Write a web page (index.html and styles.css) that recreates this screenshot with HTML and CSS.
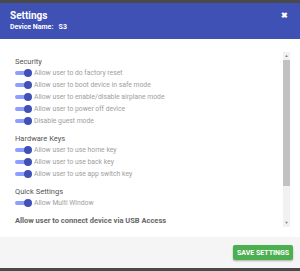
FILE: index.html
```html
<!DOCTYPE html>
<html lang="en">
<head>
  <meta charset="UTF-8">
  <meta name="viewport" content="width=device-width, initial-scale=1.0">
  <title>Settings</title>
  <link rel="stylesheet" href="styles.css">
</head>
<body>
  <!-- Settings Modal -->
  <div class="modal">
    <div class="modal-header">
      <div class="titles">
        <div class="title">Settings</div>
        <div class="device">Device Name:&nbsp;&nbsp; S3</div>
      </div>
      <span class="close">&#10006;</span>
    </div>

    <div class="modal-body">
      <div class="content">
        <div class="section">
          <div class="section-title">Security</div>
          <div class="row"><span class="toggle"></span>Allow user to do factory reset</div>
          <div class="row"><span class="toggle"></span>Allow user to boot device in safe mode</div>
          <div class="row"><span class="toggle"></span>Allow user to enable/disable airplane mode</div>
          <div class="row"><span class="toggle"></span>Allow user to power off device</div>
          <div class="row"><span class="toggle"></span>Disable guest mode</div>
        </div>
        <div class="section">
          <div class="section-title">Hardware Keys</div>
          <div class="row"><span class="toggle"></span>Allow user to use home key</div>
          <div class="row"><span class="toggle"></span>Allow user to use back key</div>
          <div class="row"><span class="toggle"></span>Allow user to use app switch key</div>
        </div>
        <div class="section">
          <div class="section-title">Quick Settings</div>
          <div class="row"><span class="toggle"></span>Allow Multi Window</div>
        </div>
        <div class="section">
          <div class="section-title strong">Allow user to connect device via USB Access</div>
          <div class="row"><span class="toggle"></span></div>
        </div>
      </div>
      <div class="scrollbar">
        <span class="arrow">&#9650;</span>
        <div class="thumb"></div>
        <div class="track"></div>
        <span class="arrow">&#9660;</span>
      </div>
    </div>

    <div class="modal-footer">
      <button class="save">SAVE SETTINGS</button>
    </div>
  </div>
</body>
</html>
```

FILE: styles.css
```css
/* General Styles */
body {
  margin: 0;
  font-family: Roboto, Arial, sans-serif;
  background-color: #4a4a4a;
  padding: 3px 0;
  height: 271px;
  box-sizing: border-box;
  overflow: hidden;
}

.modal {
  background-color: white;
  display: flex;
  flex-direction: column;
  height: 265px;
}

/* Header */
.modal-header {
  background-color: #3f51b5;
  color: white;
  height: 36px;
  box-sizing: border-box;
  padding: 7px 10px 0 10px;
  display: flex;
  justify-content: space-between;
  align-items: flex-start;
}

.title {
  font-size: 10px;
  font-weight: bold;
  line-height: 12px;
}

.device {
  font-size: 7px;
  font-weight: bold;
  line-height: 10px;
}

.close {
  font-size: 8px;
  font-weight: bold;
  line-height: 10px;
  margin-top: 1px;
  margin-right: 2px;
}

/* Body */
.modal-body {
  display: flex;
  height: 175px;
  margin-top: 13px;
  padding-right: 10px;
  flex-shrink: 0;
}

.content {
  flex: 1;
  overflow: hidden;
  padding: 5px 0 0 15px;
}

.section {
  margin-bottom: 7px;
}

.section-title {
  font-size: 7.5px;
  color: #555;
  line-height: 10px;
}

.section-title.strong {
  font-weight: bold;
  color: #666;
}

.row {
  display: flex;
  align-items: center;
  height: 12px;
  font-size: 6.8px;
  color: #9e9e9e;
}

.toggle {
  position: relative;
  width: 14px;
  height: 4px;
  border-radius: 2px;
  background-color: #8c9eff;
  margin-right: 5px;
}

.toggle::after {
  content: "";
  position: absolute;
  right: -3px;
  top: -2px;
  width: 8px;
  height: 8px;
  border-radius: 50%;
  background-color: #3f51b5;
}

/* Scrollbar */
.scrollbar {
  width: 7px;
  background-color: #f1f1f1;
  display: flex;
  flex-direction: column;
  align-items: center;
}

.arrow {
  font-size: 4px;
  color: #777;
  line-height: 8px;
  height: 8px;
}

.thumb {
  width: 100%;
  height: 126px;
  background-color: #c1c1c1;
}

.track {
  flex: 1;
}

/* Footer */
.modal-footer {
  flex: 1;
  margin-top: 10px;
  background-color: #f5f5f5;
  display: flex;
  justify-content: flex-end;
  align-items: center;
  padding-right: 7px;
}

.save {
  background-color: #4caf50;
  color: white;
  border: none;
  border-radius: 2px;
  font-family: Roboto, Arial, sans-serif;
  font-size: 7px;
  font-weight: bold;
  width: 60px;
  height: 15px;
  padding: 0;
  box-shadow: 0 1px 2px rgba(0, 0, 0, 0.3);
}
```
